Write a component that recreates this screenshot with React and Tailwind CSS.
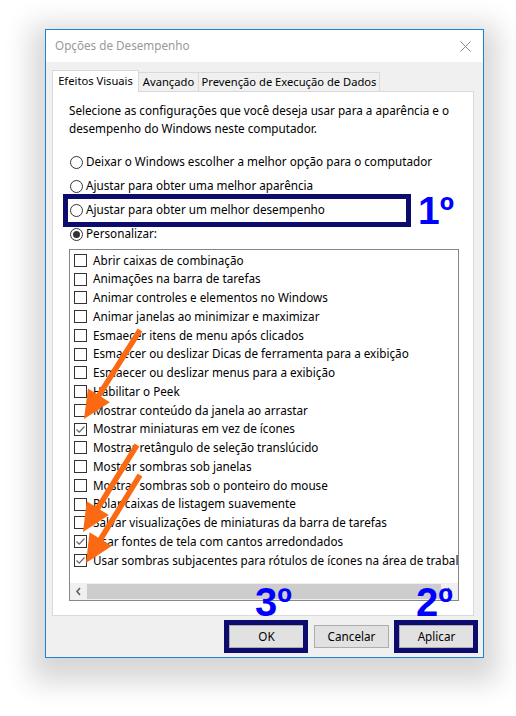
import React from "react";

const items = [
  ["Abrir caixas de combinação", false],
  ["Animações na barra de tarefas", false],
  ["Animar controles e elementos no Windows", false],
  ["Animar janelas ao minimizar e maximizar", false],
  ["Esmaecer itens de menu após clicados", false],
  ["Esmaecer ou deslizar Dicas de ferramenta para a exibição", false],
  ["Esmaecer ou deslizar menus para a exibição", false],
  ["Habilitar o Peek", false],
  ["Mostrar conteúdo da janela ao arrastar", false],
  ["Mostrar miniaturas em vez de ícones", true],
  ["Mostrar retângulo de seleção translúcido", false],
  ["Mostrar sombras sob janelas", false],
  ["Mostrar sombras sob o ponteiro do mouse", false],
  ["Rolar caixas de listagem suavemente", false],
  ["Salvar visualizações de miniaturas da barra de tarefas", false],
  ["Usar fontes de tela com cantos arredondados", true],
  ["Usar sombras subjacentes para rótulos de ícones na área de trabalho", true],
];

const radios = [
  ["Deixar o Windows escolher a melhor opção para o computador", false],
  ["Ajustar para obter uma melhor aparência", false],
  ["Ajustar para obter um melhor desempenho", false],
  ["Personalizar:", true],
];

const arrows = [
  [[140, 330], [84, 419]],
  [[137, 445], [83, 532]],
  [[140, 475], [86, 563]],
];

function Arrow({ tail, tip }) {
  const dx = tip[0] - tail[0];
  const dy = tip[1] - tail[1];
  const len = Math.hypot(dx, dy);
  const ux = dx / len;
  const uy = dy / len;
  const bx = tip[0] - ux * 28;
  const by = tip[1] - uy * 28;
  const nx = -uy * 13;
  const ny = ux * 13;
  const pts = `${tip[0]},${tip[1]} ${bx + nx},${by + ny} ${bx - nx},${by - ny}`;
  return (
    <g>
      <line x1={tail[0]} y1={tail[1]} x2={bx + ux * 4} y2={by + uy * 4} stroke="#fb6a12" strokeWidth="5.5" />
      <polygon points={pts} fill="#fb6a12" />
    </g>
  );
}

function Radio({ checked }) {
  return (
    <span className="w-[13px] h-[13px] rounded-full border border-[#333] bg-white flex items-center justify-center shrink-0">
      {checked && <span className="w-[7px] h-[7px] rounded-full bg-[#333]" />}
    </span>
  );
}

function Check({ checked }) {
  return (
    <span className="w-[13px] h-[13px] border border-[#333] bg-white shrink-0 flex items-center justify-center">
      {checked && (
        <svg width="11" height="11" viewBox="0 0 11 11">
          <polyline points="1.5,5.5 4.2,8.2 9.5,2.5" fill="none" stroke="#666" strokeWidth="1.2" />
        </svg>
      )}
    </span>
  );
}

export default function App() {
  return (
    <div className="relative w-[516px] h-[716px] bg-white overflow-hidden font-['Noto_Sans',sans-serif] text-[11.7px] text-black">
      <div className="pt-[29px] pl-[45px]">
        <div className="w-[439px] h-[629px] border border-[#1883d7] bg-[#f0f0f0] shadow-[0_10px_26px_14px_rgba(0,0,0,0.16)] flex flex-col">
          <div className="h-[32px] bg-white flex items-center justify-between pl-[9px] pr-[12px]">
            <span className="text-[#999]">Opções de Desempenho</span>
            <svg width="11" height="11" viewBox="0 0 11 11">
              <path d="M0.5 0.5 L10.5 10.5 M10.5 0.5 L0.5 10.5" stroke="#888" strokeWidth="1" />
            </svg>
          </div>
          <div className="flex-1 flex flex-col pl-[6px] pr-[9px] pt-[8px]">
            <div className="flex items-end h-[21px] relative z-10 whitespace-nowrap text-[11.2px]">
              <div className="w-[87px] h-[22px] -mb-px bg-white border border-b-0 border-[#d9d9d9] flex items-center justify-center">
                Efeitos Visuais
              </div>
              <div className="w-[60px] h-[19px] border border-b-0 border-l-0 border-[#d9d9d9] flex items-center justify-center">
                Avançado
              </div>
              <div className="w-[181px] h-[19px] border border-b-0 border-l-0 border-[#d9d9d9] flex items-center justify-center">
                Prevenção de Execução de Dados
              </div>
            </div>
            <div className="h-[525px] bg-white border border-[#d9d9d9] pl-[16px] pr-[14px] pt-[9px]">
              <p className="leading-[18px] whitespace-nowrap">
                Selecione as configurações que você deseja usar para a aparência e o
                <br />
                desempenho do Windows neste computador.
              </p>
              <div className="mt-[13px] whitespace-nowrap">
                {radios.map(([label, checked]) => (
                  <div key={label} className="h-[24px] flex items-center gap-[3px] pl-[1px]">
                    <Radio checked={checked} />
                    <span>{label}</span>
                  </div>
                ))}
              </div>
              <div className="mt-[3px] h-[352px] border border-[#828790] flex flex-col">
                <div className="flex-1 pt-px overflow-hidden">
                  {items.map(([label, checked]) => (
                    <div key={label} className="h-[18.75px] flex items-center gap-[6px] pl-[4px] whitespace-nowrap">
                      <Check checked={checked} />
                      <span>{label}</span>
                    </div>
                  ))}
                </div>
                <div className="h-[17px] bg-[#f0f0f0] flex">
                  <div className="w-[17px] flex items-center justify-center">
                    <svg width="7" height="9" viewBox="0 0 7 9">
                      <path d="M5 1 L2 4.5 L5 8" fill="none" stroke="#606060" strokeWidth="1.6" />
                    </svg>
                  </div>
                  <div className="flex-1 bg-[#cdcdcd] my-px" />
                  <div className="w-[17px] flex items-center justify-center">
                    <svg width="7" height="9" viewBox="0 0 7 9">
                      <path d="M2 1 L5 4.5 L2 8" fill="none" stroke="#606060" strokeWidth="1.6" />
                    </svg>
                  </div>
                </div>
              </div>
            </div>
            <div className="mt-[9px] flex justify-end gap-[10px]">
              {["OK", "Cancelar", "Aplicar"].map((b) => (
                <div key={b} className="w-[75px] h-[23px] bg-[#e1e1e1] border border-[#adadad] flex items-center justify-center">
                  {b}
                </div>
              ))}
            </div>
          </div>
        </div>
      </div>

      <div className="absolute left-[63px] top-[194px] w-[348px] h-[33px] border-[5px] border-[#0c0c6e]" />
      <div className="absolute left-[224px] top-[620px] w-[84px] h-[33px] border-[5px] border-[#0c0c6e]" />
      <div className="absolute left-[394px] top-[620px] w-[84px] h-[33px] border-[5px] border-[#0c0c6e]" />

      <div className="absolute left-[418px] top-[187px] font-['Liberation_Sans',sans-serif] font-bold text-[39px] leading-[48px] text-[#0000ff]">1º</div>
      <div className="absolute left-[255px] top-[578px] font-['Liberation_Sans',sans-serif] font-bold text-[40px] leading-[48px] text-[#0000ff]">3º</div>
      <div className="absolute left-[416px] top-[578px] font-['Liberation_Sans',sans-serif] font-bold text-[40px] leading-[48px] text-[#0000ff]">2º</div>

      <svg className="absolute inset-0 pointer-events-none" width="516" height="716">
        {arrows.map(([t, h], i) => (
          <Arrow key={i} tail={t} tip={h} />
        ))}
      </svg>
    </div>
  );
}
